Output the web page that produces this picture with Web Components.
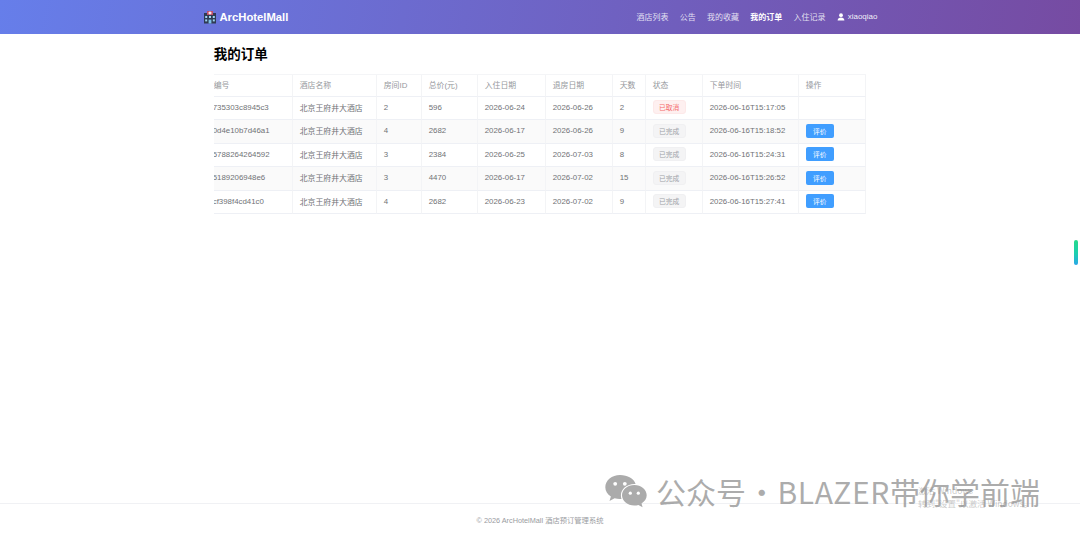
<!DOCTYPE html>
<html lang="zh">
<head>
<meta charset="utf-8">
<title>ArcHotelMall</title>
<style>
html, body { margin: 0; padding: 0; background: #fff; }
body { font-family: "Liberation Sans", "Noto Sans CJK SC", sans-serif; overflow: hidden; }
</style>
</head>
<body>
<app-shell>
  <site-header slot="header"></site-header>
  <order-list></order-list>
  <site-footer slot="footer"></site-footer>
</app-shell>
<page-overlay></page-overlay>

<script>
"use strict";

const FONT = '"Liberation Sans", "Noto Sans CJK SC", sans-serif';

const orders = [
  { id: "735303c8945c3", hotel: "北京王府井大酒店", room: 2, total: 596, from: "2026-06-24", to: "2026-06-26", days: 2, status: "已取消", time: "2026-06-16T15:17:05" },
  { id: "0d4e10b7d46a1", hotel: "北京王府井大酒店", room: 4, total: 2682, from: "2026-06-17", to: "2026-06-26", days: 9, status: "已完成", time: "2026-06-16T15:18:52" },
  { id: "5788264264592", hotel: "北京王府井大酒店", room: 3, total: 2384, from: "2026-06-25", to: "2026-07-03", days: 8, status: "已完成", time: "2026-06-16T15:24:31" },
  { id: "5189206948e6", hotel: "北京王府井大酒店", room: 3, total: 4470, from: "2026-06-17", to: "2026-07-02", days: 15, status: "已完成", time: "2026-06-16T15:26:52" },
  { id: "cf398f4cd41c0", hotel: "北京王府井大酒店", room: 4, total: 2682, from: "2026-06-23", to: "2026-07-02", days: 9, status: "已完成", time: "2026-06-16T15:27:41" },
];

class AppShell extends HTMLElement {
  constructor() {
    super();
    this.attachShadow({ mode: "open" }).innerHTML = `
<style>
:host { display: flex; flex-direction: column; height: 536px; font-family: ${FONT}; }
main { flex: 1; min-height: 0; }
</style>
<slot name="header"></slot>
<main><slot></slot></main>
<slot name="footer"></slot>`;
  }
}

class SiteHeader extends HTMLElement {
  constructor() {
    super();
    this.attachShadow({ mode: "open" }).innerHTML = `
<style>
:host { display: block; height: 34px; background: linear-gradient(100deg, #667eea 0%, #764ba2 100%); color: #fff; }
.inner { width: 675px; height: 100%; margin: 0 auto; box-sizing: border-box; display: flex; align-items: center; justify-content: space-between; }
.logo { display: flex; align-items: center; gap: 3px; font-size: 11.25px; font-weight: 700; }
.logo svg { display: block; }
nav { display: flex; align-items: center; gap: 11.25px; font-size: 8px; padding-bottom: 1px; }
nav a { color: rgba(255,255,255,.82); }
nav a.active { color: #fff; font-weight: 700; }
.user { display: flex; align-items: center; gap: 3px; color: rgba(255,255,255,.92); }
</style>
<div class="inner">
  <div class="logo">
    <svg width="14" height="14" viewBox="0 0 14 14">
      <rect x="1" y="3" width="12" height="10.5" fill="#2f3b52"/>
      <rect x="4" y="1" width="6" height="4" fill="#c0506a"/>
      <rect x="6.3" y="1.6" width="1.4" height="2.8" fill="#fff"/>
      <rect x="5.4" y="2.4" width="3.2" height="1.1" fill="#fff"/>
      <rect x="2.2" y="6" width="2" height="2" fill="#9fd4f2"/>
      <rect x="6" y="6" width="2" height="2" fill="#9fd4f2"/>
      <rect x="9.8" y="6" width="2" height="2" fill="#9fd4f2"/>
      <rect x="2.2" y="9.4" width="2" height="2" fill="#9fd4f2"/>
      <rect x="9.8" y="9.4" width="2" height="2" fill="#9fd4f2"/>
      <rect x="5.6" y="9.6" width="2.8" height="3.9" fill="#7cc0e8"/>
    </svg>
    <span>ArcHotelMall</span>
  </div>
  <nav>
    <a>酒店列表</a><a>公告</a><a>我的收藏</a><a class="active">我的订单</a><a>入住记录</a>
    <span class="user">
      <svg width="8" height="8" viewBox="0 0 8 8" fill="#fff"><circle cx="4" cy="2.2" r="1.9"/><path d="M.6 7.6c0-2 1.5-3 3.4-3s3.4 1 3.4 3z"/></svg>
      <span>xiaoqiao</span>
    </span>
  </nav>
</div>`;
  }
}

class StatusTag extends HTMLElement {
  constructor() {
    super();
    this.attachShadow({ mode: "open" }).innerHTML = `
<style>
:host { display: inline-flex; align-items: center; justify-content: center; width: 33px; height: 14px; box-sizing: border-box; border-radius: 3px; font-size: 6.75px; border: 1px solid #f0f0f2; background: #f4f4f5; color: #a0a3a8; }
:host([type="danger"]) { border-color: #fde9e9; background: #fef0f0; color: #f56c6c; }
</style>
<slot></slot>`;
  }
}

class ReviewButton extends HTMLElement {
  constructor() {
    super();
    this.attachShadow({ mode: "open" }).innerHTML = `
<style>
:host { display: inline-flex; align-items: center; justify-content: center; width: 28px; height: 14px; border-radius: 2px; font-size: 6.75px; background: #409eff; color: #fff; }
</style>
<slot></slot>`;
  }
}

class OrderList extends HTMLElement {
  constructor() {
    super();
    const heads = ["编号", "酒店名称", "房间ID", "总价(元)", "入住日期", "退房日期", "天数", "状态", "下单时间", "操作"];
    const widths = [79, 84, 45, 56, 68, 67, 33, 57, 96, 67];
    const heights = [23, 24, 23, 24, 23];
    const rows = orders.map((o, i) => `
<tr style="height:${heights[i]}px">
  <td class="id"><span>${o.id}</span></td>
  <td>${o.hotel}</td><td>${o.room}</td><td>${o.total}</td><td>${o.from}</td><td>${o.to}</td><td>${o.days}</td>
  <td><status-tag ${o.status === "已取消" ? 'type="danger"' : ""}>${o.status}</status-tag></td>
  <td>${o.time}</td>
  <td>${o.status === "已完成" ? "<review-button>评价</review-button>" : ""}</td>
</tr>`).join("");
    this.attachShadow({ mode: "open" }).innerHTML = `
<style>
:host { display: block; width: 675px; margin: 0 auto; padding: 0 11.25px; box-sizing: border-box; }
h2 { margin: 0; height: 40px; display: flex; align-items: center; font-size: 13.5px; font-weight: 700; color: #000; padding-bottom: 2px; box-sizing: border-box; }
table { border-collapse: separate; border-spacing: 0; table-layout: fixed; width: 652px; font-size: 7.875px; color: #707276; border-top: 1px solid #f4f5f7; }
th, td { padding: 0 0 2px 7px; text-align: left; white-space: nowrap; overflow: hidden; border-right: 1px solid #f3f4f6; border-bottom: 1px solid #eef0f5; box-sizing: border-box; vertical-align: middle; }
th { font-weight: 400; color: #96989d; height: 22px; padding-bottom: 3px; }
th:first-child, td.id { padding-left: 0; }
td.id span { display: block; margin-left: -1px; }
tr:nth-child(even) td { background: #fafafa; }
status-tag, review-button { vertical-align: middle; }
</style>
<h2>我的订单</h2>
<table>
  <colgroup>${widths.map(w => `<col style="width:${w}px">`).join("")}</colgroup>
  <thead><tr>${heads.map(h => `<th>${h}</th>`).join("")}</tr></thead>
  <tbody>${rows}</tbody>
</table>`;
  }
}

class SiteFooter extends HTMLElement {
  constructor() {
    super();
    this.attachShadow({ mode: "open" }).innerHTML = `
<style>
:host { display: flex; align-items: center; justify-content: center; height: 32px; border-top: 1px solid #f0f1f4; font-size: 7.3px; color: #9a9ca1; }
</style>
<span>© 2026 ArcHotelMall 酒店预订管理系统</span>`;
  }
}

// watermark, windows notice and the side handle sit over the page
class PageOverlay extends HTMLElement {
  constructor() {
    super();
    this.attachShadow({ mode: "open" }).innerHTML = `
<style>
:host { display: block; position: absolute; inset: 0; pointer-events: none; font-family: "Noto Sans CJK SC", sans-serif; }
.handle { position: absolute; left: 1074px; top: 240px; width: 4px; height: 25px; border-radius: 2px; background: linear-gradient(180deg, #25d98a, #1ccfb0 55%, #2aa6e8); }
.wm { position: absolute; left: 605px; top: 473px; display: flex; align-items: center; gap: 9px; color: rgba(140,140,140,.72); font-size: 30px; line-height: 36px; white-space: nowrap; }
.dot { margin: 0 -6px; }
.latin { letter-spacing: .6px; }
.win { position: absolute; left: 918px; top: 484px; color: rgba(120,120,120,.4); font-size: 8.5px; line-height: 13px; white-space: nowrap; }
</style>
<div class="handle"></div>
<div class="win"><div>激活 Windows</div><div>转到"设置"以激活 Windows。</div></div>
<div class="wm">
  <svg width="42" height="34" viewBox="0 0 42 34">
    <path fill="#ababab" d="M15 1C6.9 1 .3 6.4.3 13.2c0 3.9 2.2 7.2 5.6 9.4L4.5 27l5.1-2.7c1.7.5 3.5.8 5.4.8.5 0 1 0 1.5-.1-.4-1.2-.6-2.4-.6-3.7 0-6.3 6-11.4 13.5-11.4h1.2C29 4.6 22.6 1 15 1z"/>
    <circle cx="10.2" cy="9.8" r="1.9" fill="#fff"/><circle cx="19.8" cy="9.8" r="1.9" fill="#fff"/>
    <path fill="#ababab" d="M41.7 21.2c0-5.7-5.6-10.3-12.4-10.3S17 15.5 17 21.2s5.6 10.3 12.3 10.3c1.4 0 2.8-.2 4.1-.6l4.2 2.3-1.1-3.8c3.1-1.9 5.2-4.8 5.2-8.2z"/>
    <circle cx="25.3" cy="19.2" r="1.6" fill="#fff"/><circle cx="33.3" cy="19.2" r="1.6" fill="#fff"/>
  </svg>
  <span>公众号 <span class="dot">·</span> <span class="latin">BLAZER</span>带你学前端</span>
</div>`;
  }
}

customElements.define("app-shell", AppShell);
customElements.define("site-header", SiteHeader);
customElements.define("status-tag", StatusTag);
customElements.define("review-button", ReviewButton);
customElements.define("order-list", OrderList);
customElements.define("site-footer", SiteFooter);
customElements.define("page-overlay", PageOverlay);
</script>
</body>
</html>
